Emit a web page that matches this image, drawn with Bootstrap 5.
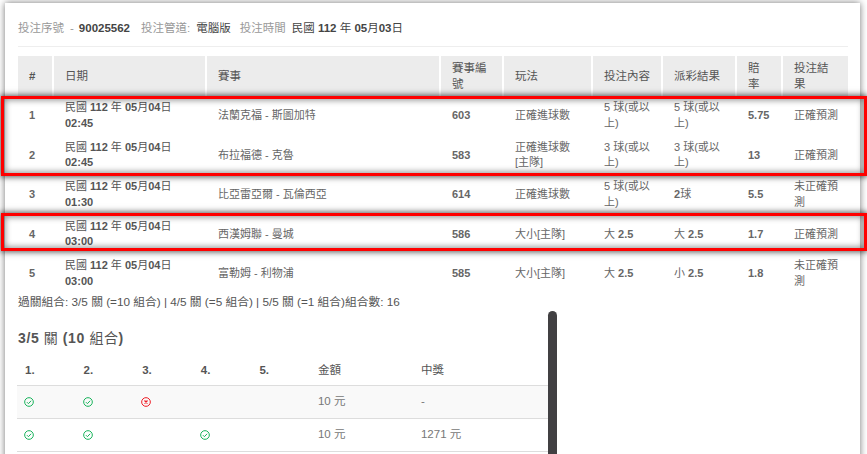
<!DOCTYPE html>
<html lang="zh-Hant">
<head>
<meta charset="utf-8">
<title>投注</title>
<link href="https://cdn.jsdelivr.net/npm/bootstrap@5.3.0/dist/css/bootstrap.min.css" rel="stylesheet">
<style>
html,body{height:454px;overflow:hidden;background:#fff}
body{font-family:"Liberation Sans","Noto Sans CJK TC",sans-serif;font-size:11.5px;color:#555;position:relative}
.sheet{margin:3px 7px 0 5px;padding:15px 12px 0 13px;height:460px;box-shadow:0 0 7px rgba(0,0,0,.55);background:#fff}
.meta{height:29px;border-bottom:1px solid #eee;margin:0 0 9px;line-height:18px;padding-top:1px;color:#999;white-space:nowrap}
.meta .vl{color:#444}
.meta .gp1{margin:0 5px 0 6px}
.meta .gp2{margin:0 6px 0 5px}
.meta .gp3{margin:0 0 0 6px}
.meta .gp4{margin:0 0 0 9px}
.bets{table-layout:fixed;width:830px;border-collapse:collapse;margin:0}
.bets th{background:#ececec;font-weight:400;border-left:2px solid #fff;padding:0 11px;height:40px;line-height:16px;vertical-align:middle;color:#555}
.bets th:first-child{border-left:0}
.bets td{padding:0 10px 0 12px;height:39.5px;line-height:15.5px;font-size:11px;vertical-align:middle;border:0;color:#666}
.bets td:first-child{padding-left:11px}
.bets td.num,.bets td b{font-weight:700}
.bets td.dt{color:#555}
.summary{margin:0;line-height:16px;font-size:11.75px;color:#555;white-space:nowrap}
.paneSec{width:531px;margin:18px 0 0 -1px;position:relative}
.paneSec h5{font-size:14px;font-weight:400;line-height:20px;margin:0 0 8px 1px;color:#555;letter-spacing:.6px}
.combo{width:531px;table-layout:fixed;border-collapse:collapse;margin:0}
.combo th{font-weight:400;height:30px;padding:0 0 0 8px;border-bottom:1px solid #ddd;vertical-align:middle;color:#555}
.combo th.n{font-weight:700}
.combo td{height:33px;padding:0 0 0 7px;border-bottom:1px solid #ddd;vertical-align:middle;color:#777}
.combo td.tx{padding-left:8px}
.combo tr.alt td{background:#f9f9f9}
.combo svg{display:block}
.thumb{position:absolute;left:548px;top:311px;width:9px;height:150px;background:#414042;border-radius:5px 5px 0 0}
.mark-box{position:absolute;left:1px;width:866px;border:3px solid #f00;box-shadow:0 0 6px 1px rgba(0,0,0,.65),inset 0 0 6px 1px rgba(0,0,0,.45);pointer-events:none}
.mb-a{top:96px;height:80px}
.mb-b{top:213px;height:38px}
</style>
</head>
<body>
<svg width="0" height="0" class="position-absolute">
<symbol id="ok" viewBox="0 0 12 12"><circle cx="6" cy="6" r="5.2" fill="none" stroke="#19b35c" stroke-width="1.2"/><path d="M3.5 6.2 5.3 8 8.6 4.5" fill="none" stroke="#19b35c" stroke-width="1.2"/></symbol>
<symbol id="no" viewBox="0 0 12 12"><circle cx="6" cy="6" r="5.2" fill="none" stroke="#ee1c25" stroke-width="1.2"/><path d="M4.2 4.2 7.8 7.8M7.8 4.2 4.2 7.8" fill="none" stroke="#ee1c25" stroke-width="1.5"/></symbol>
</svg>
<div class="sheet">
  <p class="meta">投注序號<span class="gp1">-</span><span class="vl fw-bold">90025562</span><span class="gp2"></span>投注管道:<span class="gp3"></span><span class="vl">電腦版</span><span class="gp4"></span>投注時間<span class="gp3"></span><span class="vl">民國 <b>112</b> 年 <b>05</b>月<b>03</b>日</span></p>
  <table class="bets">
    <colgroup><col style="width:35px"><col style="width:153px"><col style="width:234px"><col style="width:63px"><col style="width:89px"><col style="width:70px"><col style="width:74px"><col style="width:46px"><col style="width:66px"></colgroup>
    <thead><tr><th class="fw-bold">#</th><th>日期</th><th>賽事</th><th>賽事編號</th><th>玩法</th><th>投注內容</th><th>派彩結果</th><th>賠率</th><th>投注結果</th></tr></thead>
    <tbody>
      <tr><td class="num">1</td><td class="dt">民國 <b>112</b> 年 <b>05</b>月<b>04</b>日<br><b>02:45</b></td><td>法蘭克福 - 斯圖加特</td><td class="num">603</td><td>正確進球數</td><td>5 球(或以上)</td><td>5 球(或以上)</td><td class="num">5.75</td><td>正確預測</td></tr>
      <tr><td class="num">2</td><td class="dt">民國 <b>112</b> 年 <b>05</b>月<b>04</b>日<br><b>02:45</b></td><td>布拉福德 - 克魯</td><td class="num">583</td><td>正確進球數<br>[主隊]</td><td>3 球(或以上)</td><td>3 球(或以上)</td><td class="num">13</td><td>正確預測</td></tr>
      <tr><td class="num">3</td><td class="dt">民國 <b>112</b> 年 <b>05</b>月<b>04</b>日<br><b>01:30</b></td><td>比亞雷亞爾 - 瓦倫西亞</td><td class="num">614</td><td>正確進球數</td><td>5 球(或以上)</td><td><b>2</b>球</td><td class="num">5.5</td><td>未正確預測</td></tr>
      <tr><td class="num">4</td><td class="dt">民國 <b>112</b> 年 <b>05</b>月<b>04</b>日<br><b>03:00</b></td><td>西漢姆聯 - 曼城</td><td class="num">586</td><td>大小[主隊]</td><td>大 <b>2.5</b></td><td>大 <b>2.5</b></td><td class="num">1.7</td><td>正確預測</td></tr>
      <tr><td class="num">5</td><td class="dt">民國 <b>112</b> 年 <b>05</b>月<b>04</b>日<br><b>03:00</b></td><td>富勒姆 - 利物浦</td><td class="num">585</td><td>大小[主隊]</td><td>大 <b>2.5</b></td><td>小 <b>2.5</b></td><td class="num">1.8</td><td>未正確預測</td></tr>
    </tbody>
  </table>
  <p class="summary">過關組合: 3/5 關 (=10 組合) | 4/5 關 (=5 組合) | 5/5 關 (=1 組合)組合數: 16</p>
  <div class="paneSec">
    <h5><b>3/5</b> 關 <b>(10</b> 組合<b>)</b></h5>
    <table class="combo">
      <colgroup><col style="width:58.6px"><col style="width:58.6px"><col style="width:58.6px"><col style="width:58.6px"><col style="width:58.6px"><col style="width:103px"><col></colgroup>
      <thead><tr><th class="n">1.</th><th class="n">2.</th><th class="n">3.</th><th class="n">4.</th><th class="n">5.</th><th>金額</th><th>中獎</th></tr></thead>
      <tbody>
        <tr class="alt"><td><svg width="10" height="10"><use href="#ok"/></svg></td><td><svg width="10" height="10"><use href="#ok"/></svg></td><td><svg width="10" height="10"><use href="#no"/></svg></td><td></td><td></td><td class="tx">10 元</td><td class="tx">-</td></tr>
        <tr><td><svg width="10" height="10"><use href="#ok"/></svg></td><td><svg width="10" height="10"><use href="#ok"/></svg></td><td></td><td><svg width="10" height="10"><use href="#ok"/></svg></td><td></td><td class="tx">10 元</td><td class="tx">1271 元</td></tr>
      </tbody>
    </table>
  </div>
</div>
<div class="thumb"></div>
<div class="mark-box mb-a"></div>
<div class="mark-box mb-b"></div>
</body>
</html>
